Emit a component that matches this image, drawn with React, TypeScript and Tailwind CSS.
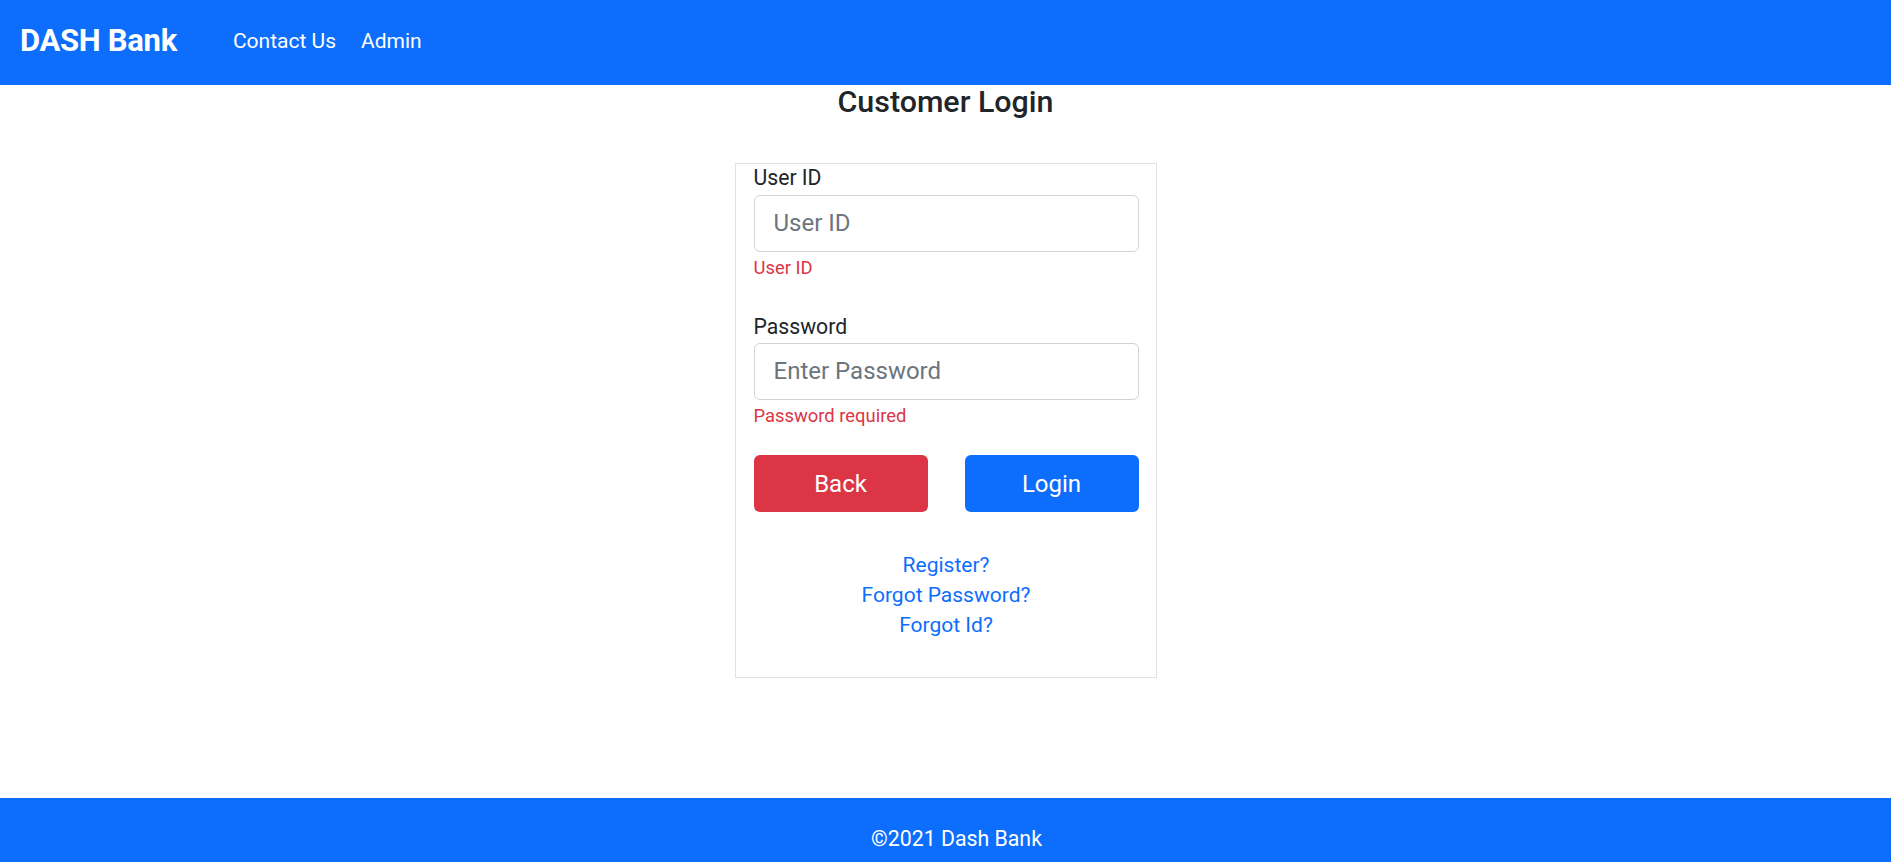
import React from "react";

export default function App() {
  return (
    <div
      className="min-h-screen flex flex-col bg-white text-[#212529]"
      style={{ fontFamily: "Roboto, 'Liberation Sans', sans-serif" }}
    >
      <nav className="h-[85px] bg-[#0d6efd] flex items-center pl-[20px] pb-[5px]">
        <span className="text-[31px] font-bold text-white leading-none tracking-[-0.3px]">DASH Bank</span>
        <div className="flex items-center ml-[56px] gap-[25px] pt-[2px]">
          <a className="text-[21px] text-white leading-none">Contact Us</a>
          <a className="text-[21px] text-white leading-none">Admin</a>
        </div>
      </nav>

      <main className="flex-1 flex flex-col items-center">
        <h3 className="text-[30.4px] font-medium leading-[34px] mt-0 mb-0">Customer Login</h3>
        <div className="mt-[44px] w-[422px] border border-[#dee2e6] pl-[18px] pr-[17px] pt-0 pb-[37px]">
          <label className="block text-[21.2px] leading-[28.8px] mb-[2px]">User ID</label>
          <input
            className="block w-full h-[57px] border border-[#ced4da] rounded-[6px] px-[19px] text-[24px] placeholder:text-[#6c757d] outline-none"
            placeholder="User ID"
          />
          <div className="text-[18.4px] leading-[25.2px] text-[#dc3545] mt-[3px]">User ID</div>

          <label className="block text-[21.2px] leading-[28.8px] mb-[1px] mt-[33px]">Password</label>
          <input
            type="password"
            className="block w-full h-[57px] border border-[#ced4da] rounded-[6px] px-[19px] text-[24px] placeholder:text-[#6c757d] outline-none"
            placeholder="Enter Password"
          />
          <div className="text-[18.4px] leading-[25.2px] text-[#dc3545] mt-[3px]">Password required</div>

          <div className="flex justify-between mt-[27px]">
            <button className="w-[174px] h-[57px] rounded-[6px] bg-[#dc3545] text-white text-[24px]">Back</button>
            <button className="w-[174px] h-[57px] rounded-[6px] bg-[#0d6efd] text-white text-[24px]">Login</button>
          </div>

          <div className="mt-[38px] flex flex-col items-center text-[21px] leading-[30px] text-[#0d6efd]">
            <a>Register?</a>
            <a>Forgot Password?</a>
            <a>Forgot Id?</a>
          </div>
        </div>
      </main>

      <footer className="h-[64px] bg-[#0d6efd] flex items-center justify-center text-white text-[21.3px] pt-[18px] pl-[22px]">
        ©2021 Dash Bank
      </footer>
    </div>
  );
}
